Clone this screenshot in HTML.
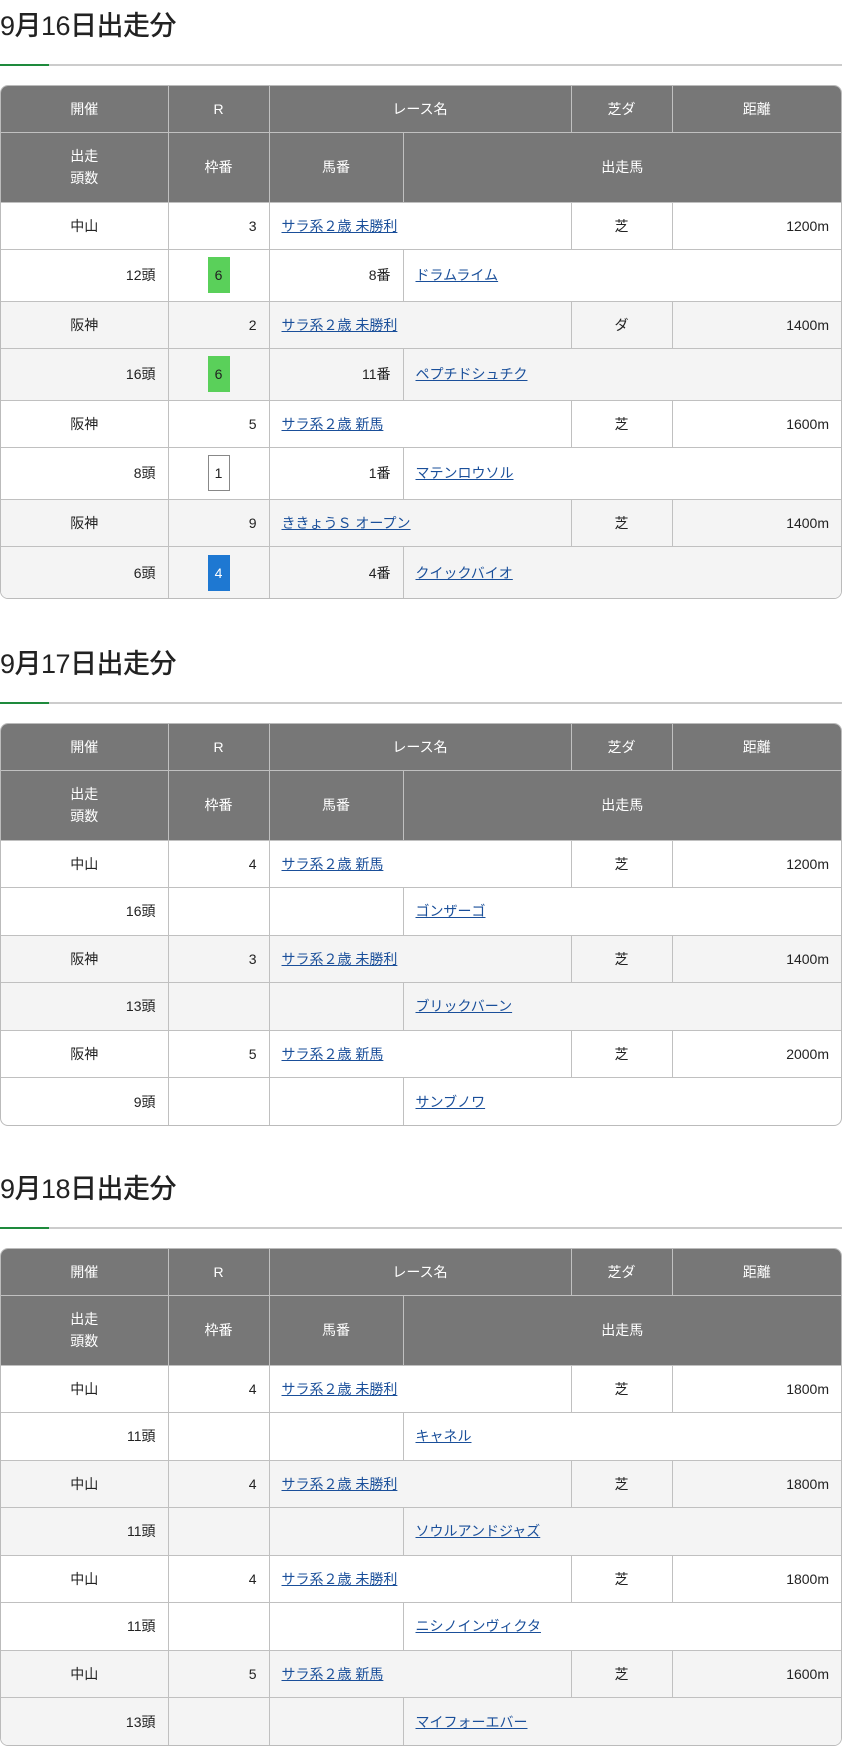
<!DOCTYPE html>
<html><head><meta charset="utf-8"><style>
*{margin:0;padding:0;box-sizing:border-box}
body{width:842px;height:1757px;background:#fff;font-family:"Liberation Sans","Noto Sans CJK JP",sans-serif;color:#222;font-size:14px;overflow:hidden}
h2{font-weight:500;font-size:27px;height:64px;line-height:52px;padding-left:0;letter-spacing:-0.5px}
.line{height:2px;background:#ccc;position:relative;margin-bottom:19px}
.line:before{content:"";position:absolute;left:0;top:0;width:49px;height:2px;background:#1e8a3c}
.wrap{border:1px solid #bbb;border-radius:8px;overflow:hidden;width:842px}
table{border-collapse:collapse;width:100%;table-layout:fixed}
td,th{border:1px solid #c0c0c0;font-weight:400}
tr td:first-child,tr th:first-child{border-left:none}
tr td:last-child,tr th:last-child{border-right:none}
table tr:first-child th{border-top:none}
table tr:last-child td{border-bottom:none}
th{background:#777;color:#fff;text-align:center;line-height:22px}
.h1 th{height:46px}.h2 th{height:70px}
tr.r td{height:47.5px}tr.hb td{height:51.5px}tr.h td{height:47.5px}
.g td{background:#f4f4f4}
.c{text-align:center}.rt{text-align:right;padding-right:12px}.l{text-align:left;padding-left:12px}
a{color:#1a4f9a;text-decoration:underline}
.b{display:inline-block;width:22px;height:36px;line-height:36px;text-align:center;vertical-align:middle}
.gr{background:#5ad05a;color:#222}.bl{background:#1e78d2;color:#fff}.wh{border:1px solid #888;background:#fff;line-height:34px}
</style></head><body>
<div>
<h2>9月16日出走分</h2><div class="line"></div>
<div class="wrap"><table>
<colgroup><col style="width:167px"><col style="width:101px"><col style="width:134px"><col style="width:168px"><col style="width:101px"><col></colgroup>
<tr class="h1"><th>開催</th><th>R</th><th colspan="2">レース名</th><th>芝ダ</th><th>距離</th></tr>
<tr class="h2"><th>出走<br>頭数</th><th>枠番</th><th>馬番</th><th colspan="3">出走馬</th></tr>
<tr class="r"><td class="c">中山</td><td class="rt">3</td><td colspan="2" class="l"><a>サラ系２歳 未勝利</a></td><td class="c">芝</td><td class="rt">1200m</td></tr>
<tr class="hb"><td class="rt">12頭</td><td class="c"><span class="b gr">6</span></td><td class="rt">8番</td><td colspan="3" class="l"><a>ドラムライム</a></td></tr>
<tr class="r g"><td class="c">阪神</td><td class="rt">2</td><td colspan="2" class="l"><a>サラ系２歳 未勝利</a></td><td class="c">ダ</td><td class="rt">1400m</td></tr>
<tr class="hb g"><td class="rt">16頭</td><td class="c"><span class="b gr">6</span></td><td class="rt">11番</td><td colspan="3" class="l"><a>ペプチドシュチク</a></td></tr>
<tr class="r"><td class="c">阪神</td><td class="rt">5</td><td colspan="2" class="l"><a>サラ系２歳 新馬</a></td><td class="c">芝</td><td class="rt">1600m</td></tr>
<tr class="hb"><td class="rt">8頭</td><td class="c"><span class="b wh">1</span></td><td class="rt">1番</td><td colspan="3" class="l"><a>マテンロウソル</a></td></tr>
<tr class="r g"><td class="c">阪神</td><td class="rt">9</td><td colspan="2" class="l"><a>ききょうＳ オープン</a></td><td class="c">芝</td><td class="rt">1400m</td></tr>
<tr class="hb g"><td class="rt">6頭</td><td class="c"><span class="b bl">4</span></td><td class="rt">4番</td><td colspan="3" class="l"><a>クイックバイオ</a></td></tr>
</table></div>
</div>
<div style="position:absolute;top:638px;left:0;width:842px">
<h2>9月17日出走分</h2><div class="line"></div>
<div class="wrap"><table>
<colgroup><col style="width:167px"><col style="width:101px"><col style="width:134px"><col style="width:168px"><col style="width:101px"><col></colgroup>
<tr class="h1"><th>開催</th><th>R</th><th colspan="2">レース名</th><th>芝ダ</th><th>距離</th></tr>
<tr class="h2"><th>出走<br>頭数</th><th>枠番</th><th>馬番</th><th colspan="3">出走馬</th></tr>
<tr class="r"><td class="c">中山</td><td class="rt">4</td><td colspan="2" class="l"><a>サラ系２歳 新馬</a></td><td class="c">芝</td><td class="rt">1200m</td></tr>
<tr class="h"><td class="rt">16頭</td><td></td><td></td><td colspan="3" class="l"><a>ゴンザーゴ</a></td></tr>
<tr class="r g"><td class="c">阪神</td><td class="rt">3</td><td colspan="2" class="l"><a>サラ系２歳 未勝利</a></td><td class="c">芝</td><td class="rt">1400m</td></tr>
<tr class="h g"><td class="rt">13頭</td><td></td><td></td><td colspan="3" class="l"><a>ブリックバーン</a></td></tr>
<tr class="r"><td class="c">阪神</td><td class="rt">5</td><td colspan="2" class="l"><a>サラ系２歳 新馬</a></td><td class="c">芝</td><td class="rt">2000m</td></tr>
<tr class="h"><td class="rt">9頭</td><td></td><td></td><td colspan="3" class="l"><a>サンブノワ</a></td></tr>
</table></div>
</div>
<div style="position:absolute;top:1163px;left:0;width:842px">
<h2>9月18日出走分</h2><div class="line"></div>
<div class="wrap"><table>
<colgroup><col style="width:167px"><col style="width:101px"><col style="width:134px"><col style="width:168px"><col style="width:101px"><col></colgroup>
<tr class="h1"><th>開催</th><th>R</th><th colspan="2">レース名</th><th>芝ダ</th><th>距離</th></tr>
<tr class="h2"><th>出走<br>頭数</th><th>枠番</th><th>馬番</th><th colspan="3">出走馬</th></tr>
<tr class="r"><td class="c">中山</td><td class="rt">4</td><td colspan="2" class="l"><a>サラ系２歳 未勝利</a></td><td class="c">芝</td><td class="rt">1800m</td></tr>
<tr class="h"><td class="rt">11頭</td><td></td><td></td><td colspan="3" class="l"><a>キャネル</a></td></tr>
<tr class="r g"><td class="c">中山</td><td class="rt">4</td><td colspan="2" class="l"><a>サラ系２歳 未勝利</a></td><td class="c">芝</td><td class="rt">1800m</td></tr>
<tr class="h g"><td class="rt">11頭</td><td></td><td></td><td colspan="3" class="l"><a>ソウルアンドジャズ</a></td></tr>
<tr class="r"><td class="c">中山</td><td class="rt">4</td><td colspan="2" class="l"><a>サラ系２歳 未勝利</a></td><td class="c">芝</td><td class="rt">1800m</td></tr>
<tr class="h"><td class="rt">11頭</td><td></td><td></td><td colspan="3" class="l"><a>ニシノインヴィクタ</a></td></tr>
<tr class="r g"><td class="c">中山</td><td class="rt">5</td><td colspan="2" class="l"><a>サラ系２歳 新馬</a></td><td class="c">芝</td><td class="rt">1600m</td></tr>
<tr class="h g"><td class="rt">13頭</td><td></td><td></td><td colspan="3" class="l"><a>マイフォーエバー</a></td></tr>
</table></div>
</div>
</body></html>
